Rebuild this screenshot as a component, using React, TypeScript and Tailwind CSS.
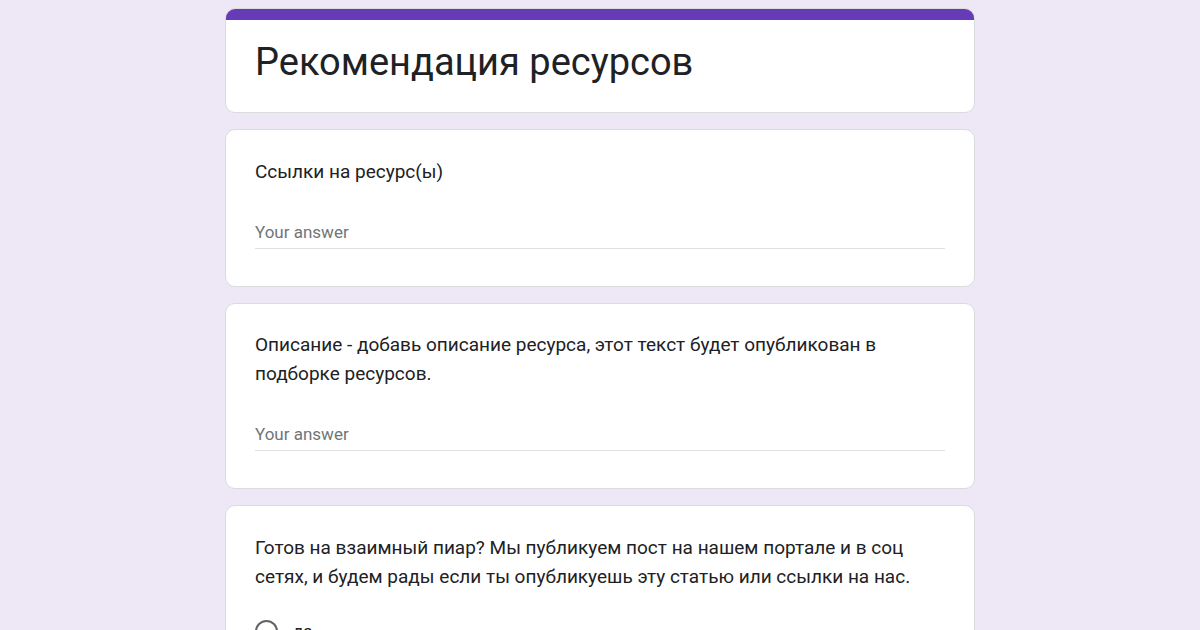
export default function App() {
  return (
    <div className="min-h-[630px] w-[1200px] overflow-hidden bg-[#ede7f6] font-['Roboto',sans-serif] text-[#202124]">
      <div className="mx-auto flex w-[750px] flex-col gap-4 pt-2">
        <div className="overflow-hidden rounded-[10px] border border-[#dadce0] bg-white">
          <div className="h-[11px] bg-[#673ab7]" />
          <div className="px-[29px] pb-[26px] pt-[18px]">
            <h1 className="text-[38px] leading-[48px] font-normal">Рекомендация ресурсов</h1>
          </div>
        </div>

        <div className="rounded-[10px] border border-[#dadce0] bg-white px-[29px] pb-[37px] pt-[27px]">
          <p className="text-[19px] leading-[29px]">Ссылки на ресурс(ы)</p>
          <div className="mt-[34px] border-b border-[#e0e0e0] pb-1 text-[17px] leading-[24px] text-[#70757a]">
            Your answer
          </div>
        </div>

        <div className="rounded-[10px] border border-[#dadce0] bg-white px-[29px] pb-[37px] pt-[26px]">
          <p className="text-[19px] leading-[29px]">
            Описание - добавь описание ресурса, этот текст будет опубликован в подборке ресурсов.
          </p>
          <div className="mt-[34px] border-b border-[#e0e0e0] pb-1 text-[17px] leading-[24px] text-[#70757a]">
            Your answer
          </div>
        </div>

        <div className="rounded-[10px] border border-[#dadce0] bg-white px-[29px] pb-[37px] pt-[27px]">
          <p className="text-[19px] leading-[29px]">
            Готов на взаимный пиар? Мы публикуем пост на нашем портале и в соц сетях, и будем рады если ты опубликуешь эту статью или ссылки на нас.
          </p>
          <div className="mt-[28px] flex items-center gap-[15px]">
            <span className="h-[23px] w-[23px] rounded-full border-2 border-[#5f6368]" />
            <span className="text-[17px] leading-[24px]">да</span>
          </div>
        </div>
      </div>
    </div>
  );
}
